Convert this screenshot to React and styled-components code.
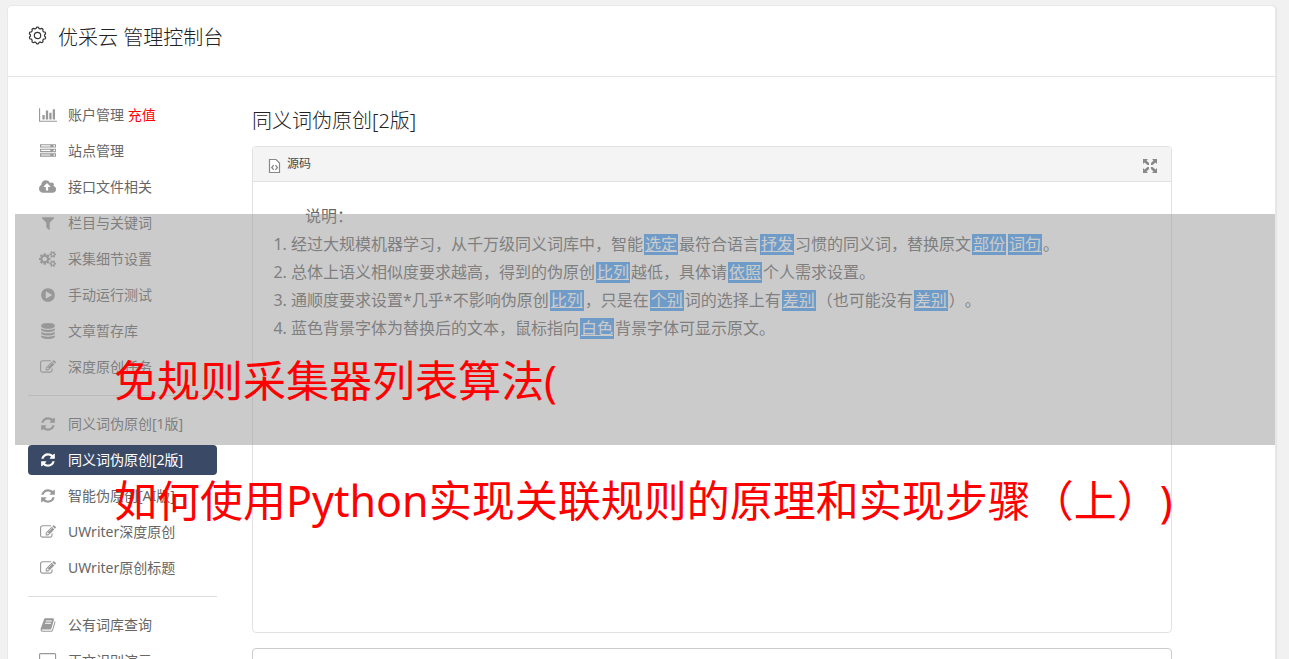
import React from "react";
import styled, { createGlobalStyle } from "styled-components";

const GlobalStyle = createGlobalStyle`
* {
  box-sizing: border-box;
}
body {
  margin: 0;
  height: 100vh;
  overflow: hidden;
  background: #f1f1f1;
  color: #666;
  font-family: "Noto Sans", "Noto Sans CJK SC", sans-serif;
  font-size: 14px;
  text-spacing-trim: space-all;
}
`
const Page = styled.div`
padding: 6px 14px 0 8px;
`
const Card = styled.div`
background: #fff;
border-radius: 4px;
box-shadow: 0 0 0 1px #e8e8e8, 1px 0 0 1px #e5e5e5;
`
const Header = styled.header`
display: flex;
align-items: flex-start;
gap: 10px;
height: 71px;
padding: 16px 20px 0;
border-bottom: 1px solid #e5e5e5;
color: #333;
`
const HeaderIcon = styled.svg`
width: 20px;
height: 28px;
`
const Brand = styled.h1`
margin: 0;
font-size: 20px;
line-height: 32px;
font-weight: 300;
color: #222;
`
const Columns = styled.div`
display: flex;
gap: 35px;
padding: 23px 103px 0 20px;
`
const Sidebar = styled.nav`
display: flex;
flex-direction: column;
flex: 0 0 189px;
gap: 6px;
`
const NavItem = styled.a`
display: flex;
align-items: center;
gap: 10px;
height: 30px;
padding: 0 10px;
border-radius: 4px;
line-height: 30px;
white-space: nowrap;
text-decoration: none;
color: ${props => props.$active ? "#fff" : "#666"};
background: ${props => props.$active ? "#3a4a66" : "transparent"};
svg {
  color: ${props => props.$active ? "#fff" : "#999"};
}
`
const IconSlot = styled.span`
display: flex;
justify-content: center;
width: 20px;
`
const Recharge = styled.span`
color: #f00;
`
const Divider = styled.hr`
width: 100%;
margin: 7px 0;
border: 0;
border-top: 1px solid #ddd;
`
const Content = styled.main`
flex: 1;
min-width: 0;
`
const Title = styled.h2`
margin: 5px 0 9px;
font-size: 20px;
line-height: 32px;
font-weight: 300;
color: #222;
`
const Editor = styled.section`
border: 1px solid #e2e2e2;
border-radius: 4px;
`
const Toolbar = styled.div`
display: flex;
align-items: center;
justify-content: space-between;
height: 35px;
padding: 0 13px 0 14px;
border-bottom: 1px solid #e2e2e2;
border-radius: 4px 4px 0 0;
background: #f4f4f4;
`
const ToolButton = styled.button`
display: flex;
align-items: center;
gap: 5px;
padding: 0;
border: 0;
background: none;
color: #484848;
font-family: inherit;
font-size: 12px;
line-height: 20px;
svg {
  color: #888;
  margin-top: 3px;
}
`
const Article = styled.div`
min-height: 450px;
padding: 20px;
font-size: 16px;
line-height: 28px;
`
const Lead = styled.p`
margin: 0;
text-indent: 2em;
`
const Points = styled.ol`
margin: 0;
padding-left: 18px;
`
const Swapped = styled.u`
margin: 0 1px;
padding: 0 1px;
display: inline-block;
line-height: 21px;
background: #479ff8;
color: #fff;
`
const NextBox = styled.section`
height: 120px;
margin-top: 15px;
border: 1px solid #ccc;
border-radius: 4px;
`
const Banner = styled.div`
position: absolute;
top: 214px;
left: 15px;
right: 14px;
height: 231px;
background: rgba(151, 151, 151, 0.5);
`
const Headline = styled.p`
position: absolute;
top: 321px;
left: 114px;
margin: 0;
font-size: 43px;
line-height: 120px;
white-space: nowrap;
color: #f00;
`

const icons = {
    chart: [2048, "M640 896v512h-256v-512h256zm384-512v1024h-256v-1024h256zm1024 1152v128h-2048v-1536h128v1408h1920zm-640-896v768h-256v-768h256zm384-384v1152h-256v-1152h256z"],
    server: [1792, "M128 1408h1024v-128h-1024v128zm0-512h1024v-128h-1024v128zm1568 448q0-40-28-68t-68-28-68 28-28 68 28 68 68 28 68-28 28-68zm-1568-960h1024v-128h-1024v128zm1568 448q0-40-28-68t-68-28-68 28-28 68 28 68 68 28 68-28 28-68zm0-512q0-40-28-68t-68-28-68 28-28 68 28 68 68 28 68-28 28-68zm96 832v384h-1792v-384h1792zm0-512v384h-1792v-384h1792zm0-512v384h-1792v-384h1792z"],
    cloud: [1920, "M1280 864q0-14-9-23l-352-352q-9-9-23-9t-23 9l-351 351q-10 12-10 24 0 14 9 23t23 9h224v352q0 13 9.5 22.5t22.5 9.5h192q13 0 22.5-9.5t9.5-22.5v-352h224q13 0 22.5-9.5t9.5-22.5zm640 288q0 159-112.5 271.5t-271.5 112.5h-1088q-185 0-316.5-131.5t-131.5-316.5q0-130 70-240t188-165q-2-30-2-43 0-212 150-362t362-150q156 0 285.5 87t188.5 231q71-62 166-62 106 0 181 75t75 181q0 76-41 138 130 31 213.5 135.5t83.5 238.5z"],
    filter: [1792, "M1595 295q17 41-14 70l-493 493v742q0 42-39 59-13 5-25 5-27 0-45-19l-256-256q-19-19-19-45v-486l-493-493q-31-29-14-70 17-39 59-39h1280q42 0 59 39z"],
    cogs: [1920, "M896 896q0-106-75-181t-181-75-181 75-75 181 75 181 181 75 181-75 75-181zm768 512q0-52-38-90t-90-38-90 38-38 90q0 53 37.5 90.5t90.5 37.5 90.5-37.5 37.5-90.5zm0-1024q0-52-38-90t-90-38-90 38-38 90q0 53 37.5 90.5t90.5 37.5 90.5-37.5 37.5-90.5zm-384 421v185q0 10-7 19.5t-16 10.5l-155 24q-11 35-32 76 34 48 90 115 7 11 7 20 0 12-7 19-23 30-82.5 89.5t-78.5 59.5q-11 0-21-7l-115-90q-37 19-77 31-11 108-23 155-7 24-30 24h-186q-11 0-20-7.5t-10-17.5l-23-153q-34-10-75-31l-118 89q-7 7-20 7-11 0-21-8-144-133-144-160 0-9 7-19 10-14 41-53t47-61q-23-44-35-82l-152-24q-10-1-17-9.5t-7-19.5v-185q0-10 7-19.5t16-10.5l155-24q11-35 32-76-34-48-90-115-7-11-7-20 0-12 7-20 22-30 82-89t79-59q11 0 21 7l115 90q34-18 77-32 11-108 23-154 7-24 30-24h186q11 0 20 7.5t10 17.5l23 153q34 10 75 31l118-89q8-7 20-7 11 0 21 8 144 133 144 160 0 8-7 19-12 16-42 54t-45 60q23 48 34 82l152 23q10 2 17 10.5t7 19.5zm640 533v140q0 16-149 31-12 27-30 52 51 113 51 138 0 4-4 7-122 71-124 71-8 0-46-47t-52-68q-20 2-30 2t-30-2q-14 21-52 68t-46 47q-2 0-124-71-4-3-4-7 0-25 51-138-18-25-30-52-149-15-149-31v-140q0-16 149-31 13-29 30-52-51-113-51-138 0-4 4-7 4-2 35-20t59-34 30-16q8 0 46 46.5t52 67.5q20-2 30-2t30 2q51-71 92-112l6-2q4 0 124 70 4 3 4 7 0 25-51 138 17 23 30 52 149 15 149 31zm0-1024v140q0 16-149 31-12 27-30 52 51 113 51 138 0 4-4 7-122 71-124 71-8 0-46-47t-52-68q-20 2-30 2t-30-2q-14 21-52 68t-46 47q-2 0-124-71-4-3-4-7 0-25 51-138-18-25-30-52-149-15-149-31v-140q0-16 149-31 13-29 30-52-51-113-51-138 0-4 4-7 4-2 35-20t59-34 30-16q8 0 46 46.5t52 67.5q20-2 30-2t30 2q51-71 92-112l6-2q4 0 124 70 4 3 4 7 0 25-51 138 17 23 30 52 149 15 149 31z"],
    play: [1792, "M896 128q209 0 385.5 103t279.5 279.5 103 385.5-103 385.5-279.5 279.5-385.5 103-385.5-103-279.5-279.5-103-385.5 103-385.5 279.5-279.5 385.5-103zm384 823q32-18 32-55t-32-55l-544-320q-31-19-64-1-32 19-32 56v640q0 37 32 56 16 8 32 8 17 0 32-9z"],
    database: [1792, "M896 768q237 0 443-43t325-127v170q0 69-103 128t-280 93.5-385 34.5-385-34.5-280-93.5-103-128v-170q119 84 325 127t443 43zm0 768q237 0 443-43t325-127v170q0 69-103 128t-280 93.5-385 34.5-385-34.5-280-93.5-103-128v-170q119 84 325 127t443 43zm0-384q237 0 443-43t325-127v170q0 69-103 128t-280 93.5-385 34.5-385-34.5-280-93.5-103-128v-170q119 84 325 127t443 43zm0-1152q208 0 385 34.5t280 93.5 103 128v128q0 69-103 128t-280 93.5-385 34.5-385-34.5-280-93.5-103-128v-128q0-69 103-128t280-93.5 385-34.5z"],
    edit: [1792, "M888 1184l116-116-152-152-116 116v56h96v96h56zm440-720q-16-16-33 1l-350 350q-17 17-1 33t33-1l350-350q17-17 1-33zm80 594v190q0 119-84.5 203.5t-203.5 84.5h-832q-119 0-203.5-84.5t-84.5-203.5v-832q0-119 84.5-203.5t203.5-84.5h832q63 0 117 25 15 7 18 23 3 17-9 29l-49 49q-14 14-32 8-23-6-45-6h-832q-66 0-113 47t-47 113v832q0 66 47 113t113 47h832q66 0 113-47t47-113v-126q0-13 9-22l64-64q15-15 35-7t20 29zm-96-738l288 288-672 672h-288v-288zm444 132l-92 92-288-288 92-92q28-28 68-28t68 28l152 152q28 28 28 68t-28 68z"],
    refresh: [1792, "M1639 1056q0 5-1 7-64 268-268 434.5t-478 166.5q-146 0-282.5-55t-243.5-157l-129 129q-19 19-45 19t-45-19-19-45v-448q0-26 19-45t45-19h448q26 0 45 19t19 45-19 45l-137 137q71 66 161 102t187 36q134 0 250-65t186-179q11-17 53-117 8-23 30-23h192q13 0 22.5 9.5t9.5 22.5zm25-800v448q0 26-19 45t-45 19h-448q-26 0-45-19t-19-45 19-45l138-138q-148-137-349-137-134 0-250 65t-186 179q-11 17-53 117-8 23-30 23h-199q-13 0-22.5-9.5t-9.5-22.5v-7q65-268 270-434.5t480-166.5q146 0 284 55.5t245 156.5l130-129q19-19 45-19t45 19 19 45z"],
    book: [1792, "M1703 478q40 57 18 129l-275 906q-19 64-76.5 107.5t-122.5 43.5h-923q-77 0-148.5-53.5t-99.5-131.5q-24-67-2-127 0-4 3-27t4-37q1-8-3-21.5t-3-19.5q2-11 8-21t16.5-23.5 16.5-23.5q23-38 45-91.5t30-91.5q3-10 .5-30t-.5-28q3-11 17-28t17-23q21-36 42-92t25-90q1-9-2.5-32t.5-28q4-13 22-30.5t22-22.5q19-26 42.5-84.5t27.5-96.5q1-8-3-25.5t-2-26.5q2-8 9-18t18-23 17-21q8-12 16.5-30.5t15-35 16-36 19.5-32 26.5-23.5 36-11.5 47.5 5.5l-1 3q38-9 51-9h761q74 0 114 56t18 130l-274 906q-36 119-71.5 153.5t-128.5 34.5h-869q-27 0-38 15-11 16-1 43 24 70 144 70h923q29 0 56-15.5t35-41.5l300-987q7-22 5-57 38 15 59 43zm-1064 2q-4 13 2 22.5t20 9.5h608q13 0 25.5-9.5t16.5-22.5l21-64q4-13-2-22.5t-20-9.5h-608q-13 0-25.5 9.5t-16.5 22.5zm-83 256q-4 13 2 22.5t20 9.5h608q13 0 25.5-9.5t16.5-22.5l21-64q4-13-2-22.5t-20-9.5h-608q-13 0-25.5 9.5t-16.5 22.5z"],
    desktop: [1920, "M1792 992v-832q0-13-9.5-22.5t-22.5-9.5h-1600q-13 0-22.5 9.5t-9.5 22.5v832q0 13 9.5 22.5t22.5 9.5h1600q13 0 22.5-9.5t9.5-22.5zm128-832v1088q0 66-47 113t-113 47h-544q0 37 16 77.5t32 71 16 43.5q0 26-19 45t-45 19h-512q-26 0-45-19t-19-45q0-14 16-44t32-70 16-78h-544q-66 0-113-47t-47-113v-1088q0-66 47-113t113-47h1600q66 0 113 47t47 113z"],
}

const groups = [
    [
        { icon: "chart", text: "账户管理", extra: "充值" },
        { icon: "server", text: "站点管理" },
        { icon: "cloud", text: "接口文件相关" },
        { icon: "filter", text: "栏目与关键词" },
        { icon: "cogs", text: "采集细节设置" },
        { icon: "play", text: "手动运行测试" },
        { icon: "database", text: "文章暂存库" },
        { icon: "edit", text: "深度原创任务" },
    ],
    [
        { icon: "refresh", text: "同义词伪原创[1版]" },
        { icon: "refresh", text: "同义词伪原创[2版]", active: true },
        { icon: "refresh", text: "智能伪原创[AI版]" },
        { icon: "edit", text: "UWriter深度原创" },
        { icon: "edit", text: "UWriter原创标题" },
    ],
    [
        { icon: "book", text: "公有词库查询" },
        { icon: "desktop", text: "正文识别演示" },
    ],
]

function Icon({ name }) {
    const [width, path] = icons[name];
    return (
        <svg width={width / 112} height="16" viewBox={`0 0 ${width} 1792`} fill="currentColor" aria-hidden="true">
            <path d={path} />
        </svg>
    );
}

function NavLink({ icon, text, extra, active }) {
    return (
        <NavItem href="#" $active={active}>
            <IconSlot><Icon name={icon} /></IconSlot>
            <span>{text}{extra && <> <Recharge>{extra}</Recharge></>}</span>
        </NavItem>
    );
}

// outline of a gear with ten rounded teeth
const gearPoints = Array.from({ length: 120 }, (_, i) => {
    const angle = (i / 120) * Math.PI * 2;
    const bump = Math.max(-0.6, Math.min(0.6, Math.cos(angle * 10)));
    const r = 7.7 + bump * 1.1;
    return `${(9.5 + r * Math.sin(angle)).toFixed(2)},${(13.5 - r * Math.cos(angle)).toFixed(2)}`;
}).join(" ");

function GearIcon() {
    return (
        <HeaderIcon viewBox="0 0 20 28" fill="none" stroke="currentColor" strokeWidth="1.2" aria-hidden="true">
            <polygon points={gearPoints} strokeLinejoin="round" />
            <circle cx="9.5" cy="13.5" r="3.2" />
        </HeaderIcon>
    );
}

function App() {
    return (
        <Page>
            <GlobalStyle />
            <Card>
                <Header>
                    <GearIcon />
                    <Brand>优采云 管理控制台</Brand>
                </Header>
                <Columns>
                    <Sidebar>
                        {groups.map((items, i) => (
                            <React.Fragment key={i}>
                                {i > 0 && <Divider />}
                                {items.map(item => <NavLink key={item.text} {...item} />)}
                            </React.Fragment>
                        ))}
                    </Sidebar>
                    <Content>
                        <Title>同义词伪原创[2版]</Title>
                        <Editor>
                            <Toolbar>
                                <ToolButton type="button">
                                    <svg width="15" height="16" viewBox="0 0 15 16" fill="none" stroke="currentColor" aria-hidden="true">
                                        <path d="M2.500 1.500h6.500l3.500 3.500v9.500h-10z" fill="#fff" strokeWidth="1.200" />
                                        <path d="M6.700 7.200l-1.900 2.300 1.900 2.300M8.500 7.200l1.900 2.300-1.900 2.300" strokeWidth="1.300" />
                                    </svg>
                                    源码
                                </ToolButton>
                                <ToolButton type="button" aria-label="最大化">
                                    <svg width="16" height="16" viewBox="0 0 16 16" fill="currentColor" aria-hidden="true">
                                        <path d="M1 1h5L4.500 2.500l2.500 2.500v2H5.500L2.500 4.500 1 6zM15 1v5l-1.500-1.500L10.500 7H9V5l2.500-2.500L10 1zM1 15v-5l1.500 1.500L5.500 9H7v2l-2.500 2.500L6 15zM15 15h-5l1.500-1.500L9 11V9h1.500l3 2.500L15 10z" />
                                    </svg>
                                </ToolButton>
                            </Toolbar>
                            <Article>
                                <Lead>说明：</Lead>
                                <Points>
                                    <li>经过大规模机器学习，从千万级同义词库中，智能<Swapped>选定</Swapped>最符合语言<Swapped>抒发</Swapped>习惯的同义词，替换原文<Swapped>部份</Swapped><Swapped>词句</Swapped>。</li>
                                    <li>总体上语义相似度要求越高，得到的伪原创<Swapped>比列</Swapped>越低，具体请<Swapped>依照</Swapped>个人需求设置。</li>
                                    <li>通顺度要求设置*几乎*不影响伪原创<Swapped>比列</Swapped>，只是在<Swapped>个别</Swapped>词的选择上有<Swapped>差别</Swapped>（也可能没有<Swapped>差别</Swapped>）。</li>
                                    <li>蓝色背景字体为替换后的文本，鼠标指向<Swapped>白色</Swapped>背景字体可显示原文。</li>
                                </Points>
                            </Article>
                        </Editor>
                        <NextBox />
                    </Content>
                </Columns>
            </Card>
            <Banner />
            <Headline>免规则采集器列表算法(<br />如何使用Python实现关联规则的原理和实现步骤（上）)</Headline>
        </Page>
    );
}

export default App
